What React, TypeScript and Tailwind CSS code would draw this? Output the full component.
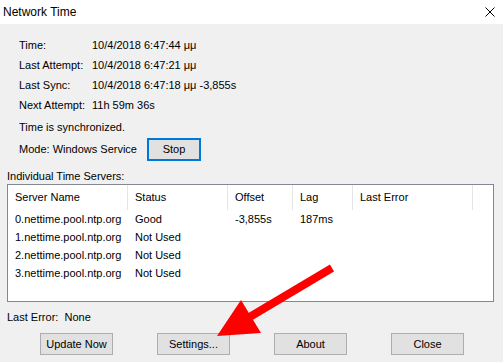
import React from "react";

type Server = {
  name: string;
  status: string;
  offset: string;
  lag: string;
  error: string;
};

const info: [string, string][] = [
  ["Time:", "10/4/2018 6:47:44 μμ"],
  ["Last Attempt:", "10/4/2018 6:47:21 μμ"],
  ["Last Sync:", "10/4/2018 6:47:18 μμ -3,855s"],
  ["Next Attempt:", "11h 59m 36s"],
];

const servers: Server[] = [
  { name: "0.nettime.pool.ntp.org", status: "Good", offset: "-3,855s", lag: "187ms", error: "" },
  { name: "1.nettime.pool.ntp.org", status: "Not Used", offset: "", lag: "", error: "" },
  { name: "2.nettime.pool.ntp.org", status: "Not Used", offset: "", lag: "", error: "" },
  { name: "3.nettime.pool.ntp.org", status: "Not Used", offset: "", lag: "", error: "" },
];

// widths of the list columns, left to right
const cols = ["w-[120px]", "w-[100px]", "w-[65px]", "w-[60px]", "w-[120px]"];
const headers = ["Server Name", "Status", "Offset", "Lag", "Last Error"];

function WinButton({ label }: { label: string }) {
  return (
    <button
      type="button"
      className="flex h-[22px] w-[73px] items-center justify-center border border-[#adadad] bg-[#e1e1e1] text-[11px] text-black"
    >
      {label}
    </button>
  );
}

export default function App() {
  return (
    <div
      className="relative h-[362px] w-[503px] overflow-hidden whitespace-nowrap bg-[#f0f0f0] text-[11px] leading-none text-black"
      style={{ fontFamily: '"Liberation Sans", Arial, sans-serif' }}
    >
      {/* Title bar */}
      <div className="flex h-[24px] items-center justify-between bg-white pl-[3px] pr-[8px]">
        <span className="text-[12px]">Network Time</span>
        <svg width="10" height="10" viewBox="0 0 10 10" className="mb-[1px]">
          <path d="M0.5 0.5L9.5 9.5M9.5 0.5L0.5 9.5" stroke="#000" strokeWidth="1" />
        </svg>
      </div>

      <div className="flex flex-col pl-[7px] pr-[9px] pt-[11px]">
        {/* Status block */}
        <div className="flex flex-col pl-[12px]">
          {info.map(([label, value]) => (
            <div key={label} className="flex h-[20px] items-center">
              <span className="w-[73px]">{label}</span>
              <span>{value}</span>
            </div>
          ))}
          <div className="mt-[2px] flex h-[20px] items-center">Time is synchronized.</div>
          <div className="mt-[1px] flex h-[23px] items-center">
            <span className="w-[128px]">Mode: Windows Service</span>
            <button
              type="button"
              className="flex h-[23px] w-[54px] items-center justify-center border-2 border-[#0078d7] bg-[#e1e1e1] text-[11px]"
            >
              Stop
            </button>
          </div>
        </div>

        <div className="mt-[7px] flex h-[16px] items-center">Individual Time Servers:</div>

        {/* Server list */}
        <div className="h-[118px] border border-[#828790] bg-white">
          <div className="flex h-[25px]">
            {headers.map((h, i) => (
              <div
                key={h}
                className={`${cols[i]} flex items-center border-r border-[#e5e5e5] pl-[7px]`}
              >
                {h}
              </div>
            ))}
          </div>
          {servers.map((s) => (
            <div key={s.name} className="flex h-[18px]">
              {[s.name, s.status, s.offset, s.lag, s.error].map((v, i) => (
                <div key={i} className={`${cols[i]} flex items-center pl-[7px]`}>
                  {v}
                </div>
              ))}
            </div>
          ))}
        </div>

        <div className="mt-[7px] flex h-[16px] items-center">Last Error:&nbsp; None</div>

        <div className="mt-[8px] flex gap-[44px] pl-[33px]">
          <WinButton label="Update Now" />
          <WinButton label="Settings..." />
          <WinButton label="About" />
          <WinButton label="Close" />
        </div>
      </div>

      {/* Red annotation arrow */}
      <svg
        className="pointer-events-none absolute left-0 top-0"
        width="503"
        height="362"
        viewBox="0 0 503 362"
      >
        <line x1="332" y1="268" x2="248" y2="318" stroke="#ff0000" strokeWidth="8" />
        <polygon points="217,336 241,300 261,333" fill="#ff0000" />
      </svg>
    </div>
  );
}
